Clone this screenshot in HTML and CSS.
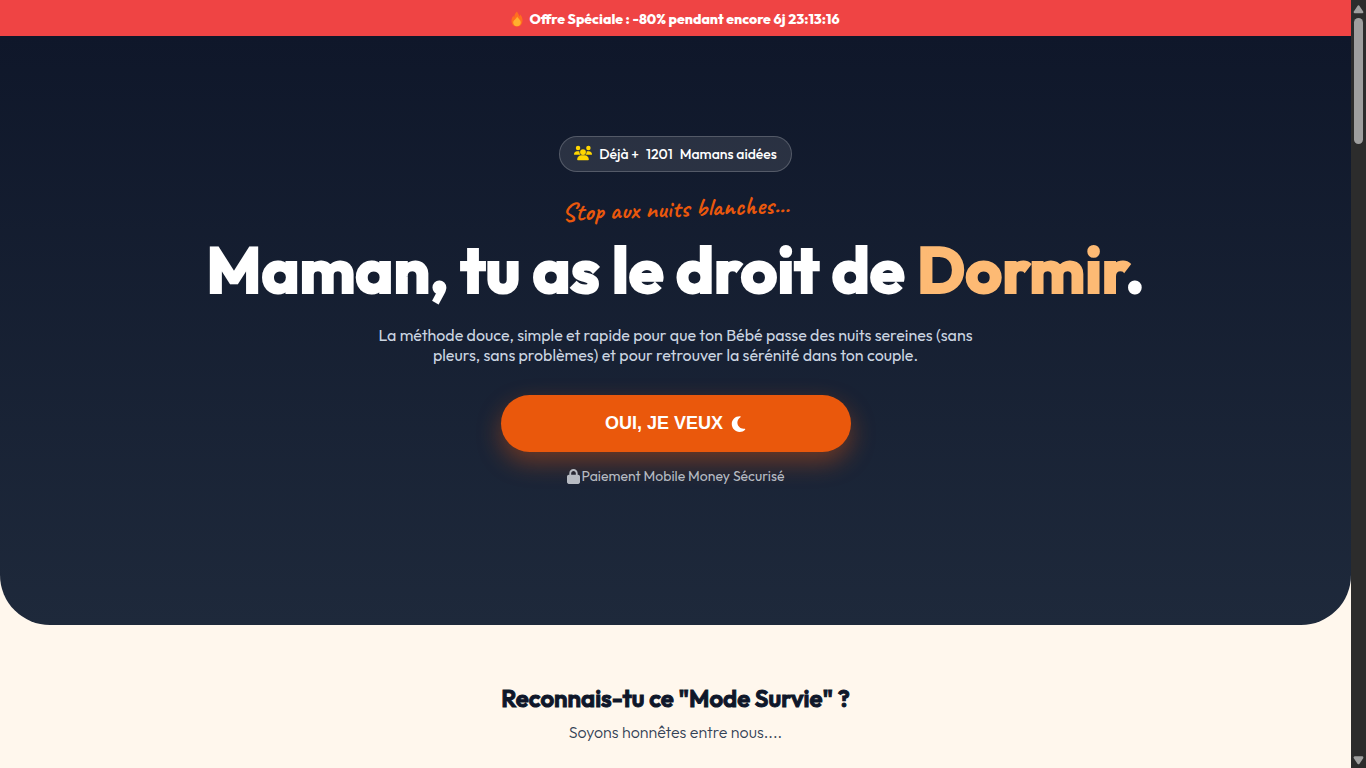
FILE: index.html
```html
<!DOCTYPE html>
<html lang="fr">
<head>
<meta charset="utf-8">
<meta name="viewport" content="width=device-width, initial-scale=1">
<title>Maman, tu as le droit de Dormir.</title>
<link rel="stylesheet" href="styles.css">
</head>
<body>
<div class="page">
  <div class="banner">
    <svg class="flame" viewBox="0 0 12 16" aria-hidden="true"><path fill="#ff6d1f" d="M6 .5C7 3 8.200 3.600 8.500 5.500 9 5 9.200 4.300 9.200 3.600 11 5.500 11.800 7.800 11.500 10.500 11.100 13.500 9 15.500 6 15.500S.7 13.500.5 10.400C.3 7.700 1.500 6.200 2.300 4.500 2.600 5.300 2.700 6 3.200 6.500 3.200 4.200 4.200 2.200 6 .5Z"/><path fill="#ffb02e" d="M6.200 5.500C7 7.800 9.800 8.500 9.800 11.500 9.800 13.800 8.200 15.200 6 15.200S2.200 13.700 2.200 11.500C2.200 9 5.200 8.400 6.200 5.500Z"/></svg>
    <span>Offre Spéciale : -80% pendant encore 6j 23:13:16</span>
  </div>
  <main>
    <section class="hero">
      <div class="badge">
        <svg class="users" viewBox="0 0 640 512" aria-hidden="true"><path fill="#ffd600" d="M144 0a80 80 0 1 1 0 160A80 80 0 1 1 144 0zM512 0a80 80 0 1 1 0 160A80 80 0 1 1 512 0zM0 298.700C0 239.800 47.800 192 106.700 192h42.700c15.900 0 31 3.500 44.600 9.700c-1.300 7.200-1.900 14.700-1.900 22.300c0 38.200 16.800 72.500 43.300 96H21.300C9.600 320 0 310.400 0 298.700zM405.300 320h-.7c26.600-23.500 43.300-57.800 43.300-96c0-7.600-.7-15-1.900-22.300c13.600-6.300 28.700-9.700 44.600-9.700h42.700C592.200 192 640 239.800 640 298.700c0 11.800-9.600 21.300-21.300 21.300H405.300zM216 224a104 104 0 1 1 208 0a104 104 0 1 1-208 0zM112 485.300C112 405 180 340 261.300 340h117.400C460 340 528 405 528 485.300c0 14.700-11.900 26.700-26.700 26.700H138.700c-14.700 0-26.700-11.900-26.700-26.700z"/></svg>
        <span>Déjà +</span><span>1201</span><span>Mamans aidées</span>
      </div>
      <p class="tagline">Stop aux nuits blanches...</p>
      <h1>Maman, tu as le droit de <span class="accent">Dormir</span>.</h1>
      <p class="intro">La méthode douce, simple et rapide pour que ton Bébé passe des nuits sereines (sans pleurs, sans problèmes) et pour retrouver la sérénité dans ton couple.</p>
      <button class="cta" type="button">OUI, JE VEUX
        <svg class="moon" viewBox="0 0 384 512" aria-hidden="true"><path fill="currentColor" d="M223.500 32C100 32 0 132.300 0 256S100 480 223.500 480c60.600 0 115.500-24.200 155.800-63.400c5-4.900 6.300-12.500 3.100-18.700s-10.100-9.700-17-8.500c-9.800 1.700-19.800 2.600-30.100 2.600c-96.900 0-175.500-78.800-175.500-176c0-65.800 36-123.100 89.300-153.300c6.100-3.500 9.200-10.500 7.700-17.300s-7.300-11.900-14.300-12.500c-6.300-.5-12.600-.9-19.500-.9z"/></svg>
      </button>
      <p class="secure"><svg class="lock" viewBox="0 0 448 512" aria-hidden="true"><path fill="currentColor" fill-rule="evenodd" d="M144 144v48h160v-48c0-44.200-35.800-80-80-80s-80 35.800-80 80zM80 192v-48C80 64.500 144.500 0 224 0s144 64.500 144 144v48h16c35.300 0 64 28.700 64 64v192c0 35.300-28.700 64-64 64H64c-35.300 0-64-28.700-64-64V256c0-35.300 28.700-64 64-64h16z"/></svg>Paiement Mobile Money Sécurisé</p>
    </section>
    <section class="survival">
      <h2>Reconnais-tu ce "Mode Survie" ?</h2>
      <p>Soyons honnêtes entre nous....</p>
    </section>
  </main>
</div>
<div class="scrollbar" aria-hidden="true">
  <svg class="arrow" viewBox="0 0 9 8"><path d="M4.500 2 7.500 6.500H1.500Z"/></svg>
  <div class="track"><div class="thumb"></div></div>
  <svg class="arrow" viewBox="0 0 9 8"><path d="M4.500 6.500 1.500 2H7.500Z"/></svg>
</div>
</body>
</html>
```
FILE: styles.css
```css
* { box-sizing: border-box; }
body {
  margin: 0;
  height: 100vh;
  overflow: hidden;
  display: grid;
  grid-template-columns: minmax(0, 1fr) 15px;
  background: #fff7ed;
  color: #0f172a;
  font-family: Outfit, Lato, sans-serif;
}
h1, h2, p { margin: 0; }
.page { overflow: hidden; }
.banner {
  display: flex;
  align-items: center;
  justify-content: center;
  gap: 6px;
  padding: 9px 8px 7px;
  background: #ef4444;
  color: #fff;
  font-size: 14px;
  line-height: 20px;
  font-weight: 800;
}
.flame { width: 12px; height: 16px; }
.hero {
  display: flex;
  flex-direction: column;
  align-items: center;
  padding: 100px 20px 139px;
  border-radius: 0 0 50px 50px;
  background: linear-gradient(#0f172a, #1e293b);
  text-align: center;
}
.badge {
  display: flex;
  align-items: flex-start;
  gap: 7px;
  padding: 7px 14px;
  border: 1px solid rgba(255, 255, 255, .2);
  border-radius: 50px;
  background: rgba(255, 255, 255, .1);
  color: #fff;
  font-size: 14px;
  line-height: 20px;
  font-weight: 500;
}
.users { width: 18px; height: 18px; }
.tagline {
  margin-top: 19px;
  color: #ea580c;
  font-family: Caveat, cursive;
  font-size: 26px;
  line-height: 36px;
  font-weight: 600;
  transform: rotate(-2deg);
}
h1 {
  margin-top: 8px;
  color: #fff;
  font-size: 64px;
  line-height: 70px;
  font-weight: 700;
  -webkit-text-stroke: 2px currentColor;
}
.accent { color: #fdba74; }
.intro {
  max-width: 600px;
  margin-top: 20px;
  color: #cbd5e1;
  font-size: 16px;
  line-height: 20px;
}
.cta {
  display: flex;
  align-items: center;
  justify-content: center;
  gap: 8px;
  width: 100%;
  max-width: 350px;
  margin-top: 30px;
  padding: 18px;
  border: 0;
  border-radius: 50px;
  background: #ea580c;
  box-shadow: 0 10px 25px rgba(234, 88, 12, .4);
  color: #fff;
  font-family: "Liberation Sans", sans-serif;
  font-size: 18px;
  line-height: 21px;
  font-weight: 700;
}
.moon { width: 15px; height: 18px; }
.secure {
  display: flex;
  align-items: center;
  gap: 2px;
  margin-top: 14px;
  color: #b7bbc2;
  font-size: 14px;
  line-height: 20px;
  font-weight: 400;
}
.lock { width: 13px; height: 15px; }
.survival { padding: 58px 20px; text-align: center; }
h2 {
  font-size: 24px;
  line-height: 30px;
  font-weight: 600;
  -webkit-text-stroke: 1px currentColor;
}
.survival p {
  margin-top: 9px;
  color: #334155;
  font-size: 16px;
  line-height: 20px;
  font-weight: 300;
}
.scrollbar {
  display: flex;
  flex-direction: column;
  align-items: center;
  padding: 4px 0 3px;
  background: #2c2c2c;
}
.arrow { width: 11px; height: 10px; fill: #9f9f9f; stroke: #9f9f9f; stroke-width: 2; stroke-linejoin: round; }
.track { flex: 1; padding: 4px 0; }
.thumb { width: 9px; height: 17%; min-height: 126px; border-radius: 5px; background: #9f9f9f; }
```
